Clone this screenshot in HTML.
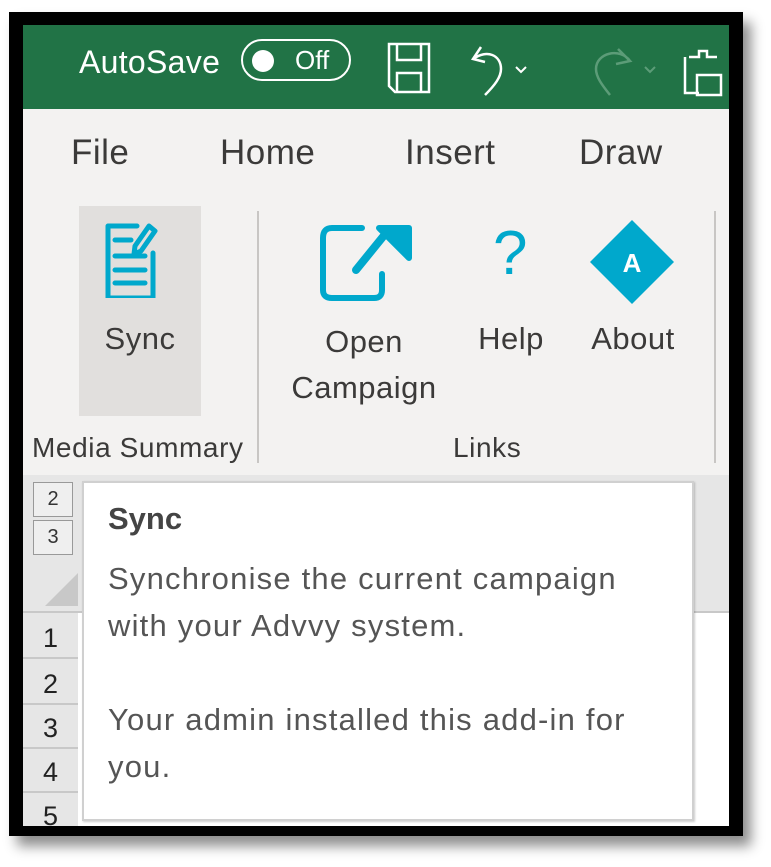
<!DOCTYPE html>
<html><head><meta charset="utf-8"><style>
*{margin:0;padding:0;box-sizing:border-box}
body{width:771px;height:867px;background:#fff;position:relative;overflow:hidden;font-family:"Liberation Sans",sans-serif}
.frame{position:absolute;left:9px;top:12px;width:734px;height:824px;background:#000;box-shadow:8px 10px 12px rgba(0,0,0,.45)}
.in{position:absolute;left:23px;top:25px;width:706px;height:801px;background:#fff;overflow:hidden}
.a{position:absolute;white-space:nowrap}
.green{left:0;top:0;width:706px;height:84px;background:#217346}
.rib{left:0;top:84px;width:706px;height:366px;background:#f3f2f1}
.tab{top:108px;font-size:35px;color:#3b3a39;letter-spacing:.5px}
.lbl{font-size:31px;color:#3b3a39;letter-spacing:.5px;text-align:center}
.gl{font-size:28px;color:#3b3a39;top:407px;letter-spacing:.6px}
.tt{font-size:31px;color:#555;letter-spacing:1.2px}
.rh{left:0;width:55px;font-size:27px;color:#222;text-align:center;border-bottom:2px solid #c8c8c8;height:44px;line-height:46px}
</style></head><body>
<div class="frame"></div>
<div class="in">
<div class="a green"></div>
<div class="a" style="left:56px;top:19px;font-size:32px;color:#fff;letter-spacing:.3px">AutoSave</div>
<div class="a" style="left:218px;top:14px;width:110px;height:42px;border:2px solid #fff;border-radius:21px"></div>
<div class="a" style="left:229px;top:25px;width:22px;height:22px;border-radius:50%;background:#fff"></div>
<div class="a" style="left:272px;top:20px;font-size:26px;color:#fff">Off</div>
<svg class="a" style="left:360px;top:14px" width="340" height="60" viewBox="0 0 340 60" fill="none" stroke="#fff" stroke-width="2.5">
<path d="M6 5h40v48H12l-6-6z M14 5v16h24V5 M14 53V34h24v19"/>
<path d="M98 8l-8 12 12 3 M90 20c14-10 28-4 28 10 0 8-6 16-16 26"/>
<path d="M133 28l5 5 5-5" stroke-width="2"/>
<g stroke="#5c9c78"><path d="M235 10l12 12-14 3 M247 22c-10-14-34-8-34 8 0 8 6 16 14 26"/><path d="M262 28l5 5 5-5" stroke-width="2"/></g>
<path d="M306 18h10v-6h8v6h10 M302 18v36h14 M314 36h24v20h-24z"/>
</svg>
<div class="a rib"></div>
<div class="a tab" style="left:48px">File</div>
<div class="a tab" style="left:197px">Home</div>
<div class="a tab" style="left:382px">Insert</div>
<div class="a tab" style="left:556px">Draw</div>
<div class="a" style="left:56px;top:181px;width:122px;height:210px;background:#e1dfdd"></div>
<svg class="a" style="left:80px;top:193px" width="70" height="80" viewBox="0 0 70 80" fill="none" stroke="#00a8cc" stroke-width="5" stroke-linecap="round" stroke-linejoin="round">
<path d="M34 8H5v72h45V35"/><path d="M12 22h16M12 38h30M12 52h30M12 65h30"/>
<path d="M46 8l6 5-14 20-7 3 1-8z"/>
</svg>
<div class="a lbl" style="left:56px;top:296px;width:122px">Sync</div>
<div class="a" style="left:234px;top:186px;width:2px;height:252px;background:#c8c6c4"></div>
<div class="a" style="left:691px;top:186px;width:2px;height:252px;background:#c8c6c4"></div>
<svg class="a" style="left:295px;top:195px" width="100" height="82" viewBox="0 0 100 82" fill="none" stroke="#00a8cc" stroke-width="6" stroke-linecap="round" stroke-linejoin="round">
<path d="M44 8H14Q5 8 5 18v52q0 8 9 8h42q8 0 8-8V54"/>
<path d="M38 50l30-37" stroke-width="8"/><path d="M61 8h30v30z" fill="#00a8cc"/>
</svg>
<div class="a lbl" style="left:240px;top:294px;width:202px;line-height:46px">Open<br>Campaign</div>
<div class="a" style="left:470px;top:193px;font-size:62px;color:#00a8cc">?</div>
<div class="a lbl" style="left:448px;top:296px;width:80px">Help</div>
<svg class="a" style="left:565px;top:195px" width="88" height="84" viewBox="0 0 88 84"><path d="M44 0L86 42 44 84 2 42z" fill="#00a8cc"/><text x="44" y="52" font-family="Liberation Sans" font-weight="bold" font-size="26" fill="#fff" text-anchor="middle">A</text></svg>
<div class="a lbl" style="left:560px;top:296px;width:100px">About</div>
<div class="a gl" style="left:9px">Media Summary</div>
<div class="a gl" style="left:430px">Links</div>
<div class="a" style="left:0;top:450px;width:706px;height:138px;background:#e6e6e6;border-bottom:2px solid #c8c8c8"></div>
<div class="a" style="left:0;top:588px;width:55px;height:213px;background:#e6e6e6"></div>
<div class="a" style="left:10px;top:457px;width:40px;height:35px;border:1px solid #999;background:#efefef;font-size:20px;text-align:center;line-height:33px;color:#333">2</div>
<div class="a" style="left:10px;top:495px;width:40px;height:35px;border:1px solid #999;background:#efefef;font-size:20px;text-align:center;line-height:33px;color:#333">3</div>
<div class="a" style="left:22px;top:548px;width:0;height:0;border-left:33px solid transparent;border-bottom:33px solid #c8c8c8"></div>
<div class="a rh" style="top:590px">1</div>
<div class="a rh" style="top:636px">2</div>
<div class="a rh" style="top:680px">3</div>
<div class="a rh" style="top:724px">4</div>
<div class="a rh" style="top:768px;border:0">5</div>
<div class="a" style="left:59px;top:456px;width:612px;height:340px;background:#fff;border:2px solid #d0d0d0;box-shadow:1px 1px 2px rgba(0,0,0,.2)"></div>
<div class="a tt" style="left:85px;top:476px;font-weight:bold;color:#444;letter-spacing:0">Sync</div>
<div class="a tt" style="left:85px;top:536px">Synchronise the current campaign</div>
<div class="a tt" style="left:85px;top:583px">with your Advvy system.</div>
<div class="a tt" style="left:85px;top:677px">Your admin installed this add-in for</div>
<div class="a tt" style="left:85px;top:724px">you.</div>
</div>
</body></html>
